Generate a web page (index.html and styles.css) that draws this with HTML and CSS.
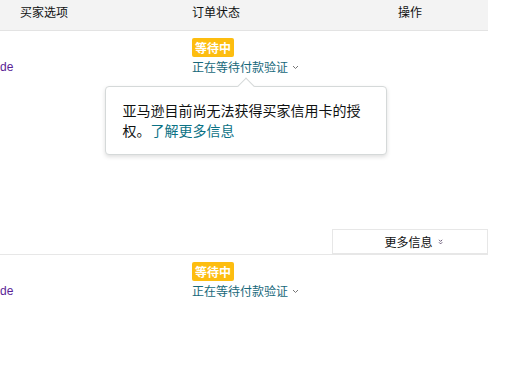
FILE: index.html
```html
<!DOCTYPE html>
<html lang="zh-CN">
<head>
    <meta charset="UTF-8">
    <meta name="viewport" content="width=device-width, initial-scale=1.0">
    <title>订单</title>
    <link rel="stylesheet" href="styles.css">
</head>
<body>
    <div class="orders">
        <div class="orders-head">
            <div class="head-cell">买家选项</div>
            <div class="head-cell">订单状态</div>
            <div class="head-cell head-action">操作</div>
        </div>

        <div class="order-row row-tall">
            <div class="buyer-cell"><a class="buyer-link" href="#">de</a></div>
            <div class="status-cell">
                <span class="badge">等待中</span>
                <span class="status-text">正在等待付款验证
                    <svg class="chev" width="7" height="5" viewBox="0 0 7 5"><path d="M1 1l2.5 2.5L6 1" fill="none" stroke="#777" stroke-width="1"/></svg>
                    <span class="popover">亚马逊目前尚无法获得买家信用卡的授权。<a class="popover-link" href="#">了解更多信息</a></span>
                </span>
            </div>
            <div class="action-cell">
                <button class="more-btn">更多信息
                    <svg class="chev-double" width="5" height="6" viewBox="0 0 5 6"><path d="M1 0.8l1.6 1.6L4.2 0.8M1 3.3l1.6 1.6L4.2 3.3" fill="none" stroke="#5a4a6a" stroke-width="0.9"/></svg>
                </button>
            </div>
        </div>

        <div class="order-row row-last">
            <div class="buyer-cell"><a class="buyer-link" href="#">de</a></div>
            <div class="status-cell">
                <span class="badge">等待中</span>
                <span class="status-text">正在等待付款验证
                    <svg class="chev" width="7" height="5" viewBox="0 0 7 5"><path d="M1 1l2.5 2.5L6 1" fill="none" stroke="#777" stroke-width="1"/></svg>
                </span>
            </div>
            <div class="action-cell"></div>
        </div>
    </div>
</body>
</html>
```

FILE: styles.css
```css
body {
    margin: 0;
    font-family: "Noto Sans CJK SC", "Liberation Sans", sans-serif;
    font-size: 12px;
    color: #0f1111;
    background-color: #fff;
}

.orders {
    width: 488px;
}

.orders-head,
.order-row {
    display: grid;
    grid-template-columns: 172px 160px 156px;
}

.orders-head {
    height: 30px;
    background-color: #f3f3f3;
    border-bottom: 1px solid #e3e3e3;
}

.head-cell {
    padding: 3px 0 0 20px;
    line-height: 17px;
}

.head-action {
    padding-left: 0;
    text-align: center;
}

.order-row {
    border-bottom: 1px solid #e7e7e7;
}

.row-tall {
    height: 223px;
}

.row-last {
    height: 123px;
    border-bottom: none;
}

.buyer-link {
    display: block;
    margin-top: 28px;
    font-family: "Liberation Sans", sans-serif;
    font-size: 12px;
    line-height: 17px;
    color: #5a1e96;
    text-decoration: none;
}

.status-cell {
    display: flex;
    flex-direction: column;
    align-items: flex-start;
    padding: 7px 0 12px 20px;
}

.badge {
    height: 19px;
    line-height: 19px;
    padding: 0 3px;
    border-radius: 2px;
    background-color: #fdbd10;
    color: #fff;
    font-weight: 700;
}

.status-text {
    position: relative;
    display: inline-flex;
    align-items: center;
    margin-top: 1px;
    line-height: 17px;
    color: #17687a;
}

.chev {
    margin: 2px 0 0 4px;
}

.popover {
    position: absolute;
    top: calc(100% + 11px);
    left: 50%;
    transform: translateX(-50%);
    z-index: 2;
    width: 246px;
    padding: 13px 17px 14px;
    background-color: #fff;
    border: 1px solid #d5d9d9;
    border-radius: 4px;
    box-shadow: 0 2px 4px rgba(0, 0, 0, 0.13);
    font-size: 14px;
    line-height: 20px;
    color: #0f1111;
}

.popover::before {
    content: "";
    position: absolute;
    top: -7px;
    left: 50%;
    width: 11px;
    height: 11px;
    margin-left: -6px;
    background-color: #fff;
    border-top: 1px solid #d5d9d9;
    border-left: 1px solid #d5d9d9;
    transform: rotate(45deg);
}

.popover-link {
    color: #0b7285;
    text-decoration: none;
}

.action-cell {
    display: flex;
    align-items: flex-end;
}

.more-btn {
    display: flex;
    align-items: center;
    justify-content: center;
    width: 100%;
    height: 25px;
    padding: 0 0 0 7px;
    background-color: #fff;
    border: 1px solid #e7e7e7;
    font-family: inherit;
    font-size: 12px;
    color: #0f1111;
    cursor: pointer;
}

.chev-double {
    margin-left: 5px;
}
```
